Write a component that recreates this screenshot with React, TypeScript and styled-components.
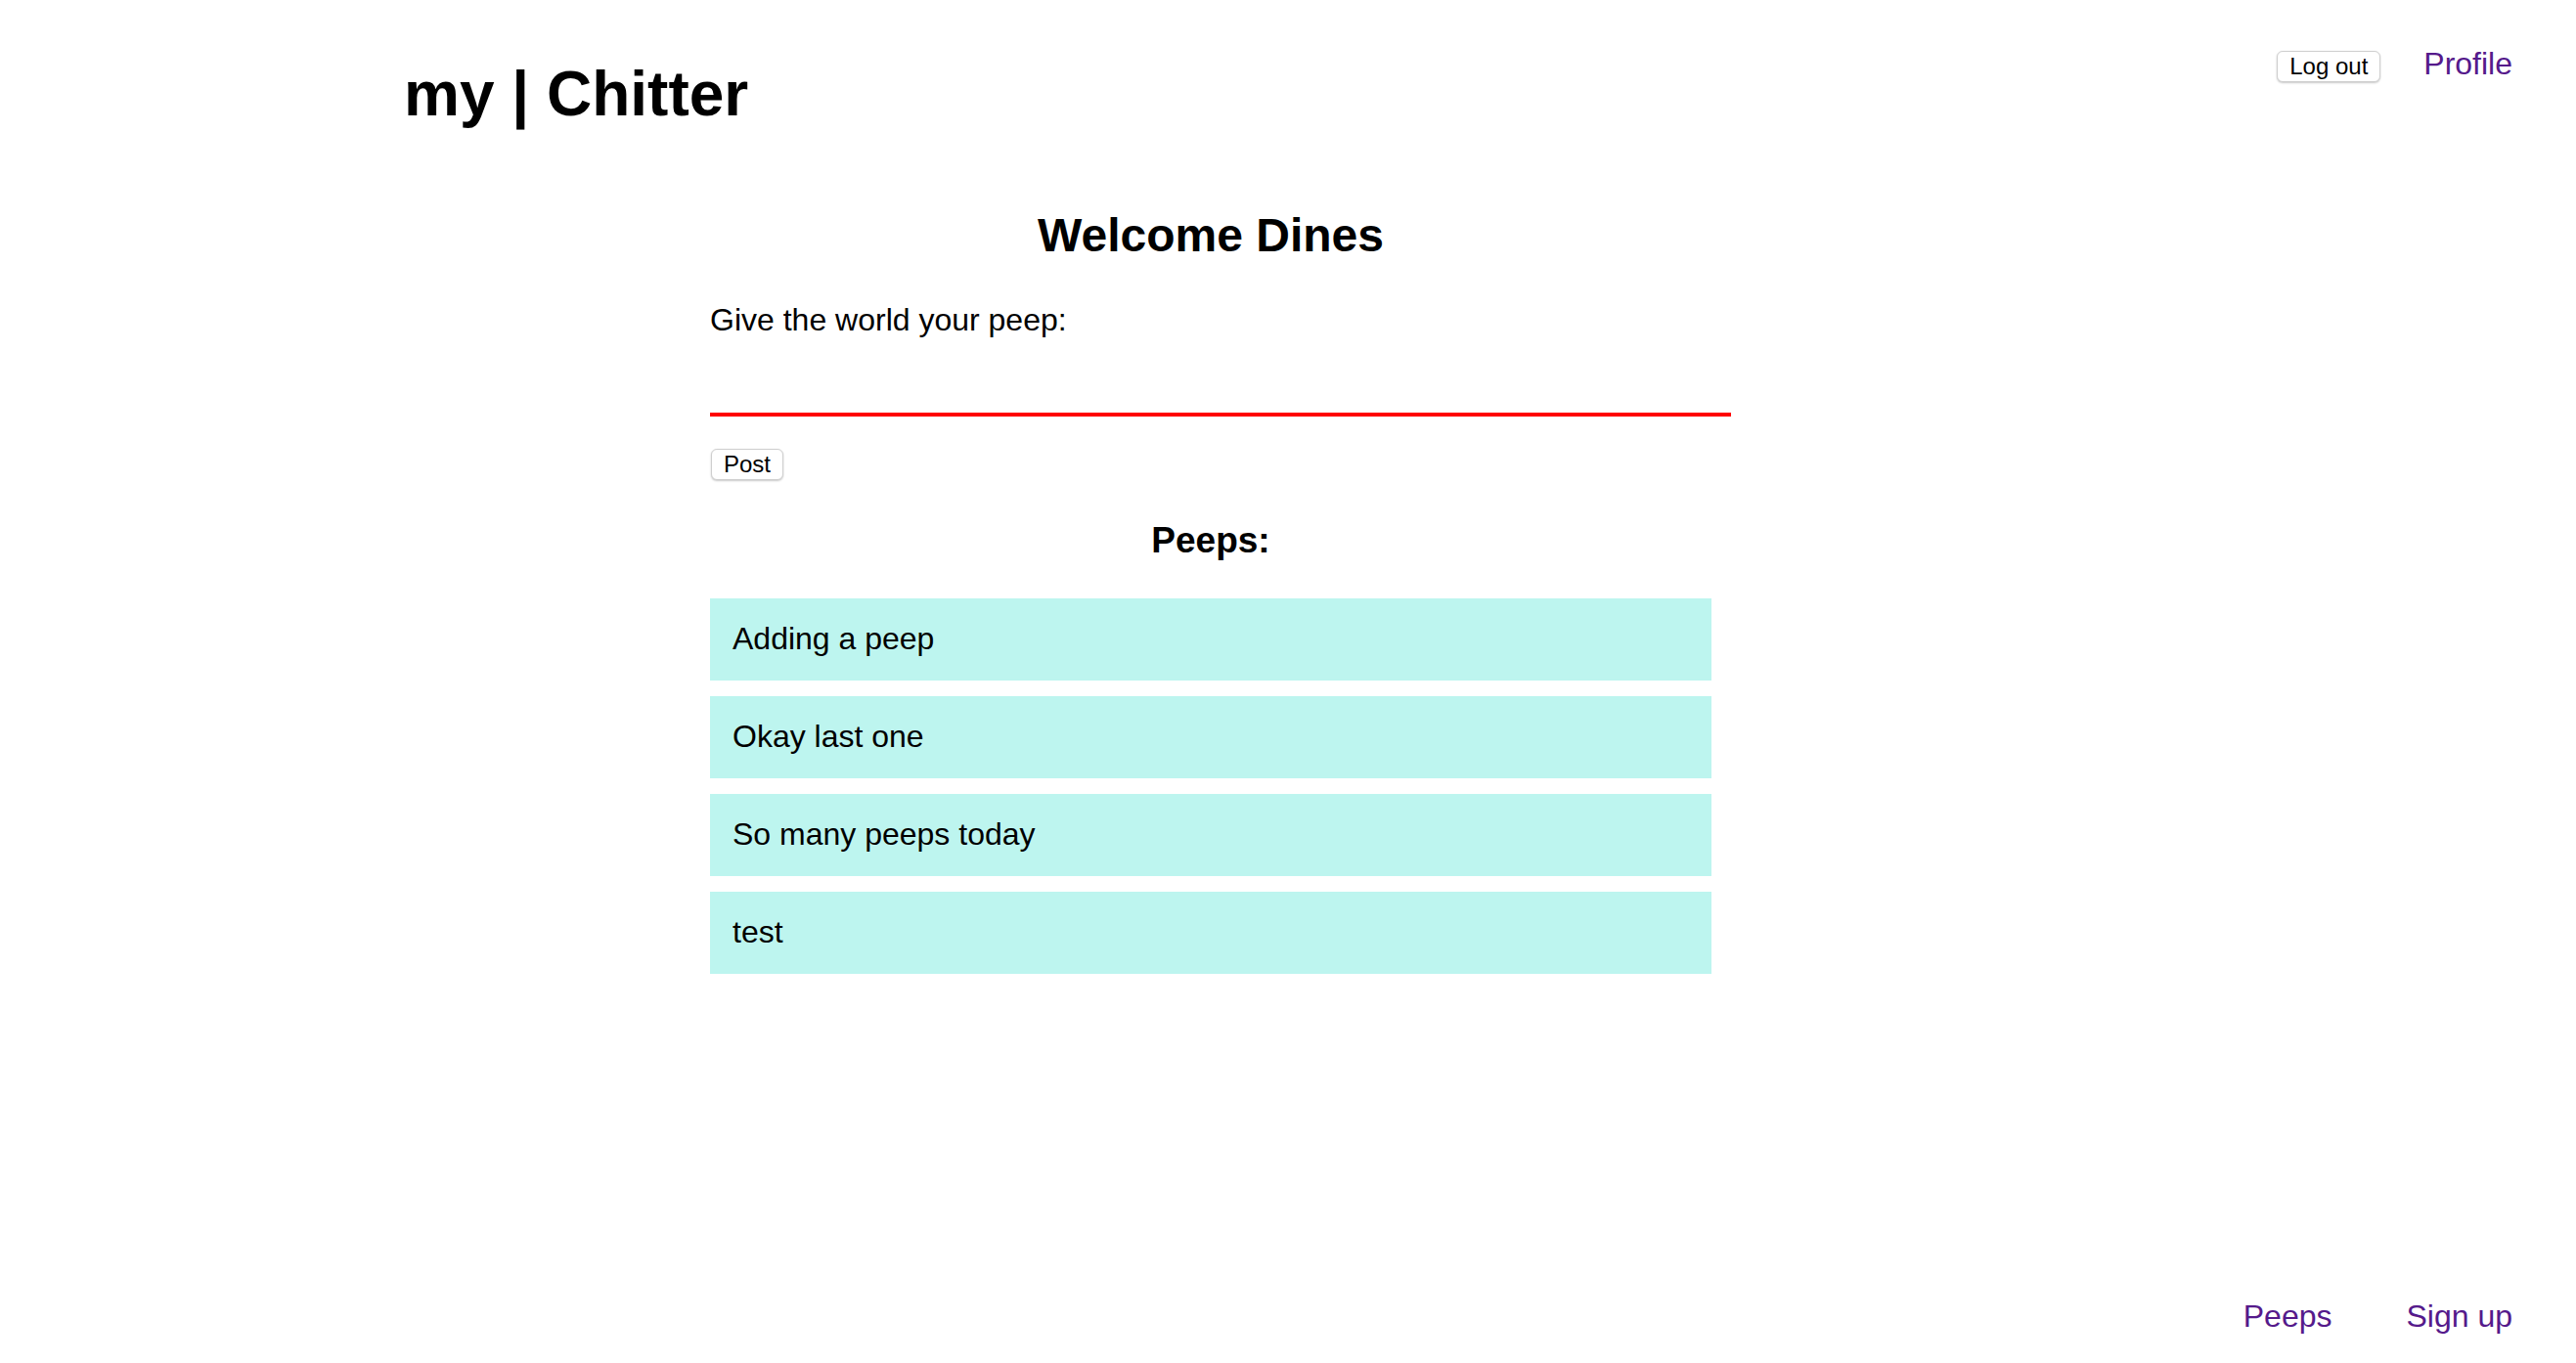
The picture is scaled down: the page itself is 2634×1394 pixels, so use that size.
import React from "react";
import styled, { createGlobalStyle } from "styled-components";

const GlobalStyle = createGlobalStyle`
  html, body {
    margin: 0;
    padding: 0;
    background: #ffffff;
  }
  body {
    font-family: "Liberation Sans", Arial, Helvetica, sans-serif;
    color: #000000;
  }
`;

const Page = styled.div`
  min-height: 100vh;
  display: flex;
  flex-direction: column;
  box-sizing: border-box;
`;

const Header = styled.header`
  display: flex;
  justify-content: space-between;
  align-items: flex-start;
  padding: 0 65px 0 413px;
`;

const Logo = styled.h1`
  margin: 59px 0 0;
  font-size: 64px;
  line-height: 74px;
  font-weight: 700;
`;

const Nav = styled.nav<{ $top?: number; $gap?: number }>`
  display: flex;
  align-items: baseline;
  gap: ${(p) => p.$gap ?? 44}px;
  margin-top: ${(p) => p.$top ?? 0}px;
`;

const NavLink = styled.a`
  font-size: 32px;
  line-height: 37px;
  color: #551a8b;
  text-decoration: none;
  cursor: pointer;
`;

const Button = styled.button`
  font-family: "Liberation Sans", Arial, Helvetica, sans-serif;
  font-size: 24px;
  line-height: 30px;
  height: 32px;
  padding: 0 12px;
  background: #ffffff;
  color: #000000;
  border: 1px solid #cfcfcf;
  border-radius: 6px;
  box-shadow: 0 1px 2px rgba(0, 0, 0, 0.22);
  cursor: pointer;
`;

const Main = styled.main`
  margin: 80px 0 0 726px;
  width: 1024px;
  display: flex;
  flex-direction: column;
  align-items: flex-start;
`;

const Welcome = styled.h2`
  align-self: stretch;
  margin: 0;
  text-align: center;
  font-size: 48px;
  line-height: 56px;
  font-weight: 700;
`;

const PeepForm = styled.form`
  align-self: stretch;
  display: flex;
  flex-direction: column;
  align-items: flex-start;
  margin-top: 40px;
`;

const Label = styled.label`
  font-size: 32px;
  line-height: 37px;
`;

const PeepInput = styled.input`
  box-sizing: border-box;
  width: calc(100% + 20px);
  height: 74px;
  margin-top: 6px;
  padding: 0 10px;
  border: none;
  border-bottom: 4px solid #ff0000;
  outline: none;
  font-family: "Liberation Sans", Arial, Helvetica, sans-serif;
  font-size: 32px;
  background: transparent;
`;

const PostButton = styled(Button)`
  margin-top: 33px;
  margin-left: 1px;
`;

const SectionTitle = styled.h3`
  align-self: stretch;
  margin: 40px 0 0;
  text-align: center;
  font-size: 37px;
  line-height: 43px;
  font-weight: 700;
`;

const PeepList = styled.ul`
  align-self: stretch;
  list-style: none;
  margin: 38px 0 0;
  padding: 0;
  display: flex;
  flex-direction: column;
  gap: 16px;
`;

const PeepItem = styled.li`
  background: #bdf5ef;
  padding: 23px 23px 25px;
  font-size: 32px;
  line-height: 36px;
`;

const Footer = styled.footer`
  margin-top: auto;
  display: flex;
  justify-content: flex-end;
  padding: 0 65px 29px 0;
`;

const peeps = ["Adding a peep", "Okay last one", "So many peeps today", "test"];

export default function App() {
  return (
    <Page>
      <GlobalStyle />
      <Header>
        <Logo>my | Chitter</Logo>
        <Nav $top={47} $gap={44}>
          <Button type="button">Log out</Button>
          <NavLink>Profile</NavLink>
        </Nav>
      </Header>
      <Main>
        <Welcome>Welcome Dines</Welcome>
        <PeepForm onSubmit={(e) => e.preventDefault()}>
          <Label htmlFor="peep">Give the world your peep:</Label>
          <PeepInput id="peep" type="text" />
          <PostButton type="submit">Post</PostButton>
        </PeepForm>
        <SectionTitle>Peeps:</SectionTitle>
        <PeepList>
          {peeps.map((p) => (
            <PeepItem key={p}>{p}</PeepItem>
          ))}
        </PeepList>
      </Main>
      <Footer>
        <Nav $gap={76}>
          <NavLink>Peeps</NavLink>
          <NavLink>Sign up</NavLink>
        </Nav>
      </Footer>
    </Page>
  );
}
